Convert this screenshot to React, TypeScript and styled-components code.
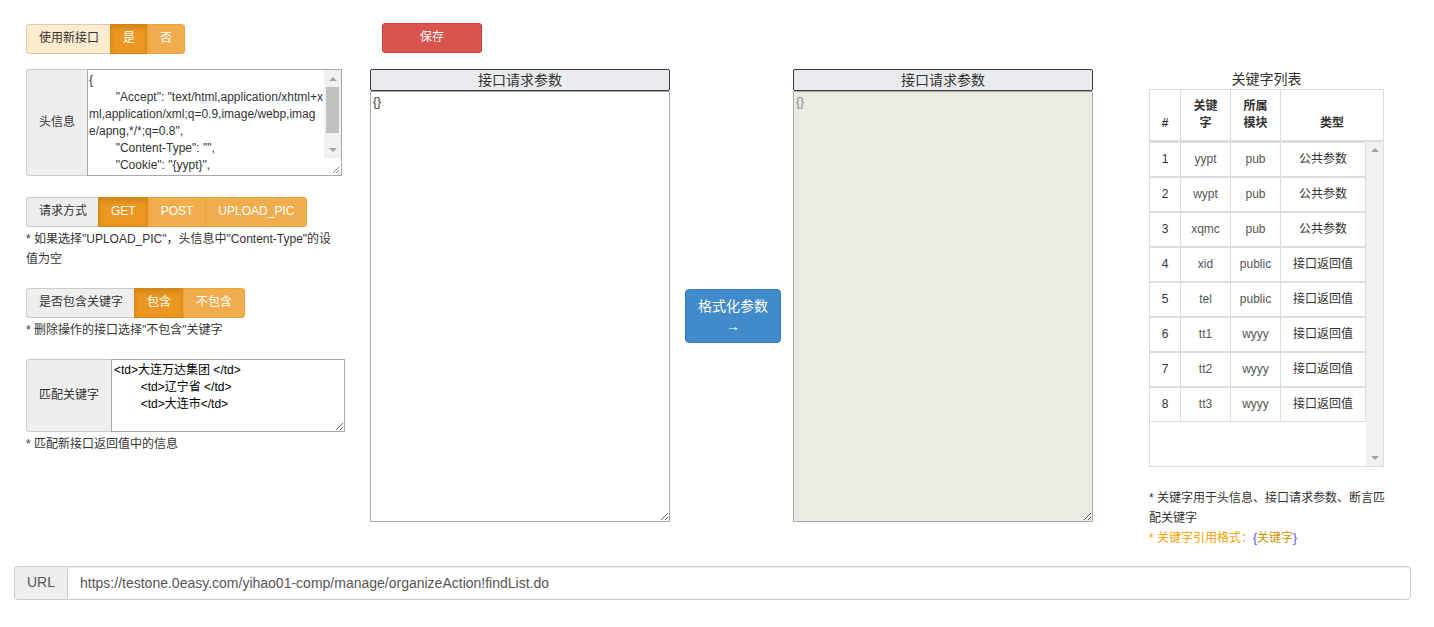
import React from "react";
import styled, { createGlobalStyle, css } from "styled-components";

const GlobalStyle = createGlobalStyle`
  html, body {
    margin: 0;
    padding: 0;
    background: #fff;
  }
  body {
    font-family: "Liberation Sans", Arial, "Noto Sans CJK SC", sans-serif;
    font-size: 12px;
    line-height: 1.42857;
    color: #333;
  }
  * { box-sizing: border-box; }
`;

const headerJson = `{
\t"Accept": "text/html,application/xhtml+xml,application/xml;q=0.9,image/webp,image/apng,*/*;q=0.8",
\t"Content-Type": "",
\t"Cookie": "{yypt}",
\t"User-Agent": "Mozilla/5.0 (Windows NT 10.0; Win64; x64)"
}`;

const matchText = `<td>大连万达集团 </td>
\t<td>辽宁省 </td>
\t<td>大连市</td>`;

const keywords = [
  { id: 1, key: "yypt", module: "pub", type: "公共参数" },
  { id: 2, key: "wypt", module: "pub", type: "公共参数" },
  { id: 3, key: "xqmc", module: "pub", type: "公共参数" },
  { id: 4, key: "xid", module: "public", type: "接口返回值" },
  { id: 5, key: "tel", module: "public", type: "接口返回值" },
  { id: 6, key: "tt1", module: "wyyy", type: "接口返回值" },
  { id: 7, key: "tt2", module: "wyyy", type: "接口返回值" },
  { id: 8, key: "tt3", module: "wyyy", type: "接口返回值" },
];

export default function App() {
  return (
    <>
      <GlobalStyle />
      <Page>
        <Main>
          <LeftCol>
            <InputGroup style={{ marginTop: 1 }}>
              <Addon tone="warm">使用新接口</Addon>
              <ToggleButton active>是</ToggleButton>
              <ToggleButton last>否</ToggleButton>
            </InputGroup>

            <FieldGroup gap={15}>
              <Addon>头信息</Addon>
              <ScrollField>
                <HeaderText defaultValue={headerJson} />
                <ScrollColumn>
                  <ScrollButton>
                    <Arrow />
                  </ScrollButton>
                  <ThumbTrack>
                    <Thumb />
                  </ThumbTrack>
                  <ScrollButton>
                    <Arrow down />
                  </ScrollButton>
                  <Grip>
                    <svg width="17" height="17" viewBox="0 0 17 17">
                      <path d="M15 9 L9 15 M15 12 L12 15" stroke="#8a8a8a" strokeWidth="1" />
                    </svg>
                  </Grip>
                </ScrollColumn>
              </ScrollField>
            </FieldGroup>

            <InputGroup gap={21}>
              <Addon>请求方式</Addon>
              <ToggleButton active>GET</ToggleButton>
              <ToggleButton>POST</ToggleButton>
              <ToggleButton last>UPLOAD_PIC</ToggleButton>
            </InputGroup>
            <Hint>* 如果选择"UPLOAD_PIC"，头信息中"Content-Type"的设值为空</Hint>

            <InputGroup gap={19}>
              <Addon>是否包含关键字</Addon>
              <ToggleButton active>包含</ToggleButton>
              <ToggleButton last>不包含</ToggleButton>
            </InputGroup>
            <Hint>* 删除操作的接口选择"不包含"关键字</Hint>

            <FieldGroup gap={19}>
              <Addon>匹配关键字</Addon>
              <MatchArea defaultValue={matchText} />
            </FieldGroup>
            <Hint>* 匹配新接口返回值中的信息</Hint>
          </LeftCol>

          <MiddleCol>
            <SaveButton>保存</SaveButton>
            <PanelRow>
              <Panel>
                <PanelTitle>接口请求参数</PanelTitle>
                <PanelArea defaultValue="{}" />
              </Panel>
              <FormatButton>
                格式化参数
                <br />→
              </FormatButton>
              <Panel>
                <PanelTitle>接口请求参数</PanelTitle>
                <PanelArea defaultValue="{}" readOnly muted />
              </Panel>
            </PanelRow>
          </MiddleCol>

          <RightCol>
            <ListTitle>关键字列表</ListTitle>
            <KeywordBox>
              <HeadRow>
                <HeadCell>#</HeadCell>
                <HeadCell>关键字</HeadCell>
                <HeadCell>所属模块</HeadCell>
                <HeadCell last>类型</HeadCell>
              </HeadRow>
              <BodyWrap>
                <Rows>
                  {keywords.map((k) => (
                    <BodyRow key={k.id}>
                      <Cell>{k.id}</Cell>
                      <Cell soft>{k.key}</Cell>
                      <Cell soft>{k.module}</Cell>
                      <Cell>{k.type}</Cell>
                    </BodyRow>
                  ))}
                </Rows>
                <ScrollTrack>
                  <Arrow />
                  <Arrow down />
                </ScrollTrack>
              </BodyWrap>
            </KeywordBox>
            <Notes>
              <div>* 关键字用于头信息、接口请求参数、断言匹配关键字</div>
              <Warn>
                * 关键字引用格式：<Brace>{"{"}</Brace>
                <Gold>关键字</Gold>
                <Brace>{"}"}</Brace>
              </Warn>
            </Notes>
          </RightCol>
        </Main>

        <UrlBar>
          <UrlAddon>URL</UrlAddon>
          <UrlInput defaultValue="https://testone.0easy.com/yihao01-comp/manage/organizeAction!findList.do" />
        </UrlBar>
      </Page>
    </>
  );
}

const Page = styled.div`
  width: 1434px;
  padding: 23px 14px 0;
`;

const Main = styled.div`
  display: flex;
  align-items: flex-start;
`;

const LeftCol = styled.div`
  width: 320px;
  margin-left: 12px;
  display: flex;
  flex-direction: column;
  align-items: flex-start;
`;

const InputGroup = styled.div<{ gap?: number }>`
  display: flex;
  height: 30px;
  margin-top: ${({ gap }) => gap ?? 0}px;
`;

const FieldGroup = styled.div<{ gap?: number }>`
  display: flex;
  margin-top: ${({ gap }) => gap ?? 0}px;
`;

const Addon = styled.div<{ tone?: "warm" }>`
  display: flex;
  align-items: center;
  padding: 0 12px;
  font-size: 12px;
  color: #333;
  white-space: nowrap;
  background: ${({ tone }) => (tone === "warm" ? "#feecd0" : "#eee")};
  border: 1px solid ${({ tone }) => (tone === "warm" ? "#dccbb2" : "#ccc")};
  border-right: none;
  border-radius: 3px 0 0 3px;
`;

const ToggleButton = styled.button<{ active?: boolean; last?: boolean }>`
  height: 30px;
  padding: 0 12px;
  font: inherit;
  font-size: 12px;
  color: #fff;
  background: #f0ad4e;
  border: 1px solid #eea236;
  margin-left: -1px;
  border-radius: ${({ last }) => (last ? "0 3px 3px 0" : "0")};
  ${({ active }) =>
    active &&
    css`
      background: #ec971f;
      border-color: #d58512;
      box-shadow: inset 0 3px 5px rgba(0, 0, 0, 0.125);
    `}
`;

const ScrollField = styled.div`
  display: flex;
  width: 255px;
  height: 107px;
  border: 1px solid #a9a9a9;
  background: #fff;
`;

const HeaderText = styled.textarea`
  flex: 1;
  height: 100%;
  padding: 2px 0 2px 1px;
  margin: 0;
  border: none;
  resize: none;
  overflow: hidden;
  font-family: "Liberation Sans", Arial, "Noto Sans CJK SC", sans-serif;
  font-size: 12px;
  line-height: 17px;
  color: #333;
  word-break: break-all;
  tab-size: 8;
  outline: none;
`;

const ScrollColumn = styled.div`
  width: 17px;
  display: flex;
  flex-direction: column;
  background: #f1f1f1;
`;

const ScrollButton = styled.div`
  height: 17px;
  display: flex;
  align-items: center;
  justify-content: center;
`;

const ThumbTrack = styled.div`
  flex: 1;
  padding: 0 2px;
`;

const Thumb = styled.div`
  height: 46px;
  background: #c1c1c1;
`;

const Grip = styled.div`
  height: 17px;
  background: #fff;
  display: flex;
`;

const MatchArea = styled.textarea`
  width: 234px;
  height: 73px;
  padding: 2px;
  margin: 0;
  font-family: "Liberation Sans", Arial, "Noto Sans CJK SC", sans-serif;
  font-size: 12px;
  line-height: 17px;
  color: #000;
  border: 1px solid #a9a9a9;
  border-radius: 0;
  tab-size: 8;
  outline: none;
`;

const Hint = styled.div`
  margin-top: 2px;
  width: 315px;
  line-height: 20px;
  color: #333;
`;

const MiddleCol = styled.div`
  margin-left: 24px;
  display: flex;
  flex-direction: column;
`;

const SaveButton = styled.button`
  width: 100px;
  height: 30px;
  margin-left: 12px;
  font: inherit;
  font-size: 12px;
  color: #fff;
  background: #d9534f;
  border: 1px solid #d43f3a;
  border-radius: 3px;
`;

const PanelRow = styled.div`
  display: flex;
  align-items: flex-start;
  margin-top: 16px;
`;

const Panel = styled.div`
  width: 300px;
  display: flex;
  flex-direction: column;
`;

const PanelTitle = styled.div`
  height: 22px;
  line-height: 20px;
  text-align: center;
  font-size: 14px;
  color: #333;
  background: #e9ebee;
  border: 1px solid #3a3a3a;
  border-radius: 2px;
`;

const PanelArea = styled.textarea<{ muted?: boolean }>`
  width: 300px;
  height: 431px;
  padding: 2px;
  margin: 0;
  font-family: "Liberation Sans", Arial, "Noto Sans CJK SC", sans-serif;
  font-size: 12px;
  line-height: 16px;
  color: ${({ muted }) => (muted ? "#888" : "#333")};
  background: ${({ muted }) => (muted ? "#ebebe4" : "#fff")};
  border: 1px solid #a9a9a9;
  outline: none;
`;

const FormatButton = styled.button`
  width: 96px;
  margin: 220px 12px 0 15px;
  padding: 6px 12px;
  font: inherit;
  font-size: 14px;
  line-height: 20px;
  color: #fff;
  background: #428bca;
  border: 1px solid #357ebd;
  border-radius: 4px;
`;

const RightCol = styled.div`
  width: 235px;
  margin-left: 56px;
  display: flex;
  flex-direction: column;
`;

const ListTitle = styled.div`
  margin-top: 46px;
  height: 20px;
  line-height: 20px;
  font-size: 14px;
  text-align: center;
  color: #333;
`;

const KeywordBox = styled.div`
  border: 1px solid #ddd;
  display: flex;
  flex-direction: column;
`;

const HeadRow = styled.div`
  display: grid;
  grid-template-columns: 31px 50px 50px 1fr;
`;

const HeadCell = styled.div<{ last?: boolean }>`
  display: flex;
  align-items: flex-end;
  justify-content: center;
  padding: 8px;
  height: 52px;
  font-weight: bold;
  text-align: center;
  line-height: 17px;
  color: #333;
  border-bottom: 2px solid #ddd;
  border-right: ${({ last }) => (last ? "none" : "1px solid #ddd")};
`;

const BodyWrap = styled.div`
  display: flex;
  height: 324px;
`;

const Rows = styled.div`
  flex: 1;
  display: flex;
  flex-direction: column;
`;

const BodyRow = styled.div`
  display: grid;
  grid-template-columns: 31px 50px 50px 1fr;
`;

const Cell = styled.div<{ soft?: boolean }>`
  height: 35px;
  padding: 8px 4px;
  line-height: 17px;
  text-align: center;
  color: ${({ soft }) => (soft ? "#555" : "#333")};
  border-top: 1px solid #ddd;
  border-bottom: 1px solid #ddd;
  border-right: 1px solid #ddd;
`;

const ScrollTrack = styled.div`
  width: 17px;
  background: #f1f1f1;
  display: flex;
  flex-direction: column;
  justify-content: space-between;
  align-items: center;
  padding: 6px 0;
`;

const Arrow = styled.span<{ down?: boolean }>`
  width: 0;
  height: 0;
  border-left: 4px solid transparent;
  border-right: 4px solid transparent;
  ${({ down }) =>
    down
      ? css`
          border-top: 4px solid #a3a3a3;
        `
      : css`
          border-bottom: 4px solid #a3a3a3;
        `}
`;

const Notes = styled.div`
  margin-top: 21px;
  width: 242px;
  line-height: 20px;
  color: #333;
`;

const Warn = styled.div`
  color: #f8a000;
`;

const Brace = styled.span`
  color: #4a4aff;
`;

const Gold = styled.span`
  color: #c89400;
`;

const UrlBar = styled.div`
  display: flex;
  height: 34px;
  margin-top: 18px;
  width: 1397px;
`;

const UrlAddon = styled.div`
  display: flex;
  align-items: center;
  padding: 0 12px;
  font-size: 14px;
  color: #555;
  background: #eee;
  border: 1px solid #ccc;
  border-right: none;
  border-radius: 4px 0 0 4px;
`;

const UrlInput = styled.input`
  flex: 1;
  height: 34px;
  padding: 6px 12px;
  font-family: "Liberation Sans", Arial, sans-serif;
  font-size: 14px;
  color: #555;
  border: 1px solid #ccc;
  border-radius: 0 4px 4px 0;
  box-shadow: inset 0 1px 1px rgba(0, 0, 0, 0.075);
  outline: none;
`;
